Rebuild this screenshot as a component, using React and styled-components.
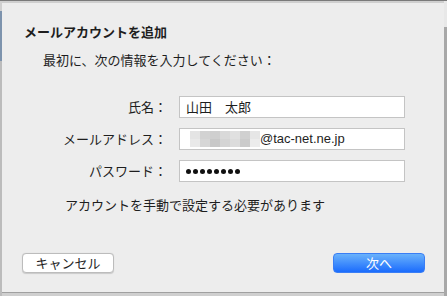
import { createGlobalStyle, styled } from "styled-components"

const GlobalStyle = createGlobalStyle`
    html, body {
        margin: 0;
        padding: 0;
        background: #d6d6d6;
    }
    body {
        font-family: "Noto Sans CJK JP", "Noto Sans", sans-serif;
        -webkit-font-smoothing: antialiased;
    }
`

const Backdrop = styled.div`
    width: 447px;
    height: 296px;
    box-sizing: border-box;
    padding: 2px 3px 3px 2px;
    border-top: 1px solid #7a7a7a;
    background:
        linear-gradient(to bottom, #d0d0d0 0 10px, #7d93ad 10px 60px, #bcbcbc 60px) left / 2px 100% no-repeat,
        linear-gradient(to bottom, #e8e8e8 0 26px, #a8a8a8 26px) right / 3px 100% no-repeat,
        #cfcfcf;
    display: flex;
`

const Sheet = styled.div`
    flex: 1;
    background: #ededed;
    border-bottom: 1px solid #a0a0a0;
    padding: 20px 0 0;
    color: #1e1e1e;
    font-size: 13px;
    line-height: 18px;
    display: flex;
    flex-direction: column;
`

const Title = styled.h1`
    margin: 0 0 0 22px;
    font-size: 13px;
    line-height: 18px;
    font-weight: 700;
`

const Lead = styled.p`
    margin: 10px 0 0 41px;
`

const Form = styled.div`
    margin-top: 27px;
    display: grid;
    grid-template-columns: 165px 226px;
    column-gap: 12px;
    row-gap: 10px;
`

const Label = styled.label`
    text-align: right;
    align-self: center;
    white-space: nowrap;
`

const Field = styled.div`
    height: 22px;
    box-sizing: border-box;
    background: #fff;
    border: 1px solid #c4c4c4;
    padding: 0 6px;
    display: flex;
    align-items: center;
    gap: 0;
    font-family: ${(p) => (p.$latin ? `"Liberation Sans", "Noto Sans CJK JP", sans-serif` : "inherit")};
`

const Mosaic = styled.div`
    display: grid;
    grid-template-columns: repeat(7, 10px);
    grid-template-rows: 8px 8px;
    margin-left: 4px;
`

const Cell = styled.span`
    background: ${(p) => p.$c};
`

const Dots = styled.div`
    display: flex;
    gap: 2px;
`

const Dot = styled.span`
    width: 5px;
    height: 5px;
    border-radius: 50%;
    background: #111;
`

const Note = styled.p`
    margin: 14px 0 0 63px;
`

const Footer = styled.div`
    margin-top: 39px;
    padding: 0 19px 0 20px;
    display: flex;
    justify-content: space-between;
`

const Button = styled.button`
    width: 92px;
    height: 20px;
    box-sizing: border-box;
    border-radius: 4px;
    font-family: inherit;
    font-size: 13px;
    line-height: 18px;
    padding: 0;
    border: 1px solid ${(p) => (p.$primary ? "#3a7ef5" : "#bcbcbc")};
    color: ${(p) => (p.$primary ? "#fff" : "#1e1e1e")};
    background: ${(p) =>
        p.$primary ? "linear-gradient(to bottom, #6ab2fb, #1b6cfd)" : "#fff"};
    box-shadow: ${(p) => (p.$primary ? "none" : "0 0.5px 1px rgba(0,0,0,0.15)")};
`

const mosaic = [
    "#e4e4e4", "#d2d2d2", "#cfcfcf", "#d9d9d9", "#e0e0e0", "#d0d0d0", "#e6e6e6",
    "#e9e9e9", "#d6d6d6", "#c8c8c8", "#d4d4d4", "#dcdcdc", "#cbcbcb", "#ececec",
]

export default function App() {
    return (
        <>
            <GlobalStyle />
            <Backdrop>
                <Sheet>
                    <Title>メールアカウントを追加</Title>
                    <Lead>最初に、次の情報を入力してください：</Lead>
                    <Form>
                        <Label>氏名：</Label>
                        <Field>山田　太郎</Field>
                        <Label>メールアドレス：</Label>
                        <Field $latin>
                            <Mosaic>
                                {mosaic.map((c, i) => (
                                    <Cell key={i} $c={c} />
                                ))}
                            </Mosaic>
                            @tac-net.ne.jp
                        </Field>
                        <Label>パスワード：</Label>
                        <Field>
                            <Dots>
                                {Array.from({ length: 8 }, (_, i) => (
                                    <Dot key={i} />
                                ))}
                            </Dots>
                        </Field>
                    </Form>
                    <Note>アカウントを手動で設定する必要があります</Note>
                    <Footer>
                        <Button>キャンセル</Button>
                        <Button $primary>次へ</Button>
                    </Footer>
                </Sheet>
            </Backdrop>
        </>
    )
}
